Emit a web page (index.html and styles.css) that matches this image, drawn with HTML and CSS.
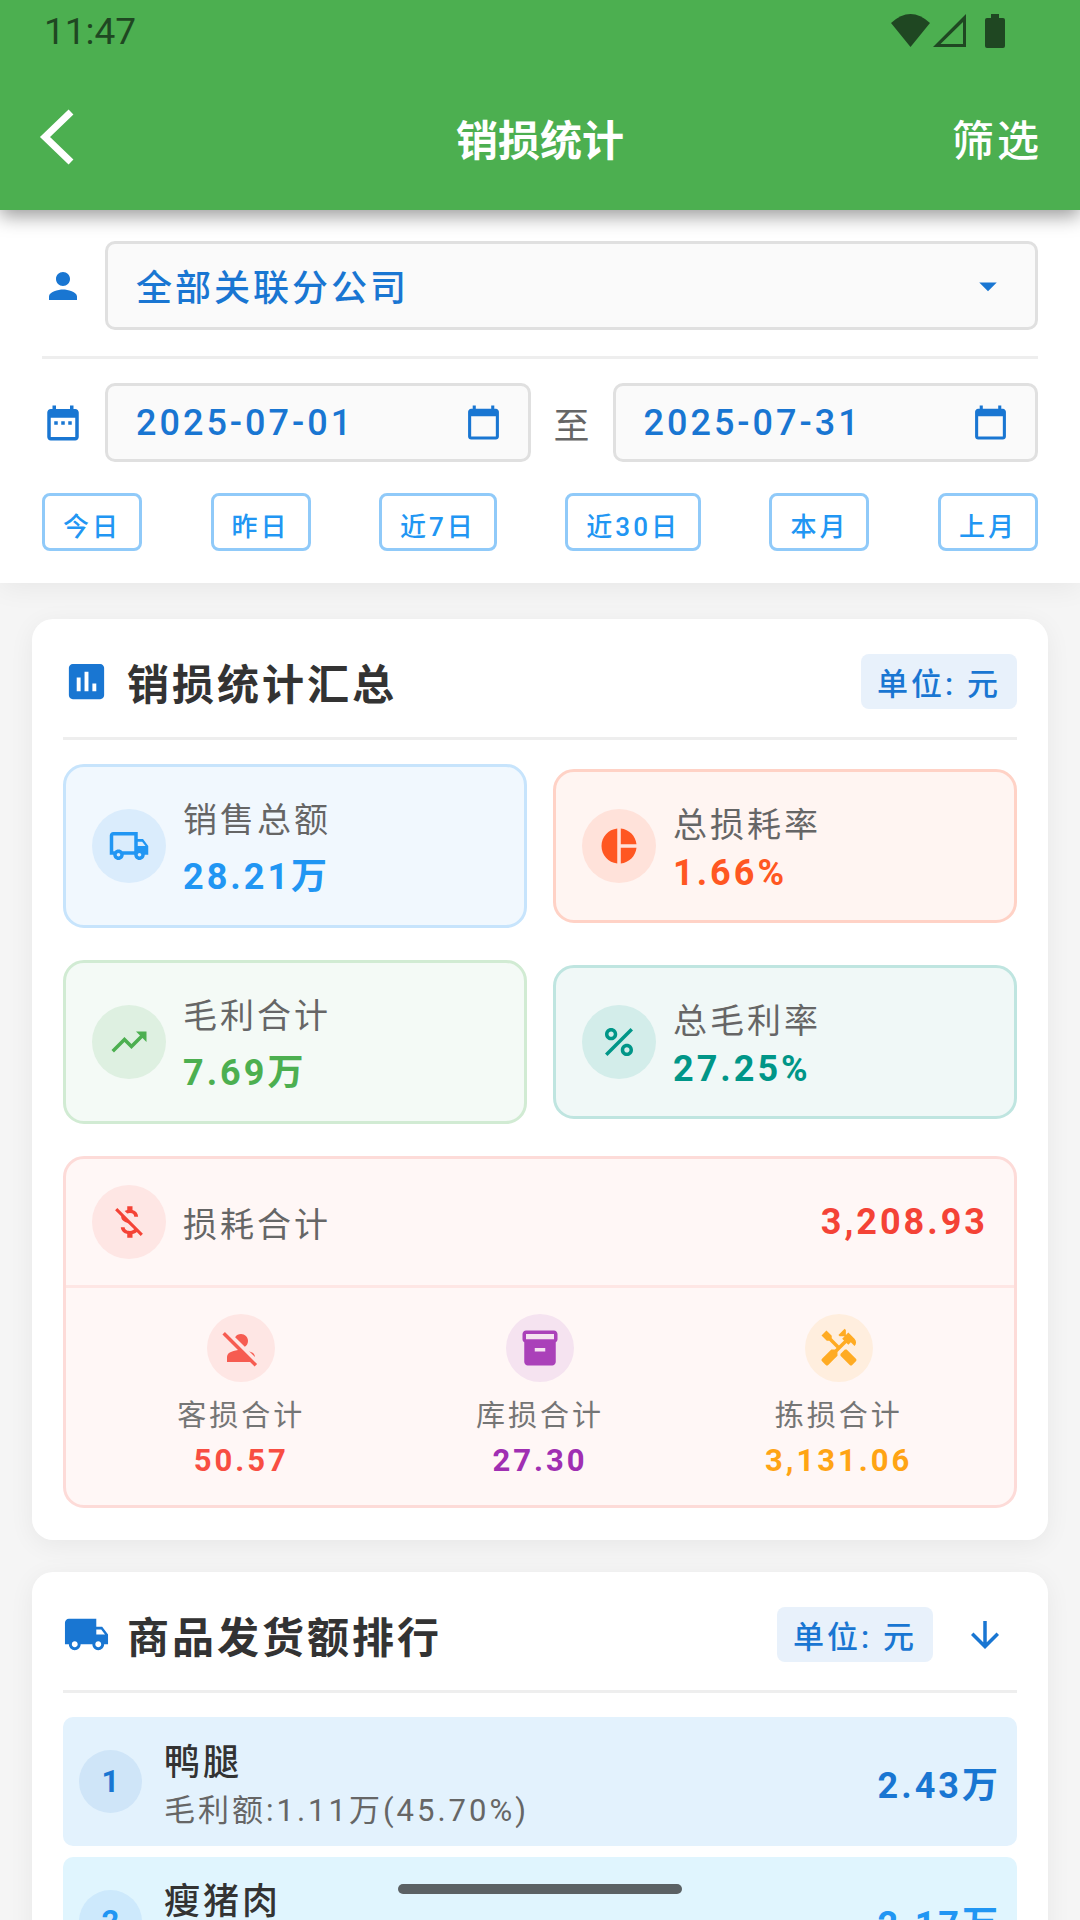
FILE: index.html
```html
<!DOCTYPE html>
<html lang="zh-CN">
<head>
<meta charset="utf-8">
<meta name="viewport" content="width=device-width, initial-scale=1">
<title>销损统计</title>
<link rel="stylesheet" href="styles.css">
</head>
<body>
<div class="app">
  <header class="top">
    <div class="status">
      <span class="clock">11:47</span>
      <svg class="status-icons" viewBox="0 0 114 34" aria-hidden="true">
        <path d="M0 9Q19.500-9 39 9L19.500 33z"/>
        <path fill-rule="evenodd" d="M75 0V33H42zM72 8L49.500 30H72z"/>
        <path d="M100 0h8v4h4q2 0 2 2v26q0 2-2 2H96q-2 0-2-2V6q0-2 2-2h4z"/>
      </svg>
    </div>
    <div class="toolbar">
      <button class="back" type="button" aria-label="返回">
        <svg viewBox="0 0 36 56" aria-hidden="true"><path d="M33 3L7 28l26 25" fill="none" stroke="currentColor" stroke-width="7"/></svg>
      </button>
      <h1 class="page-title">销损统计</h1>
      <button class="filter-btn" type="button">筛选</button>
    </div>
  </header>

  <main class="content">
    <form class="filters">
      <div class="filter-row company-row">
        <svg class="icon blue" viewBox="0 0 24 24" aria-hidden="true"><path d="M12 12c2.210 0 4-1.790 4-4s-1.790-4-4-4-4 1.790-4 4 1.790 4 4 4zm0 2c-2.670 0-8 1.340-8 4v2h16v-2c0-2.660-5.330-4-8-4z"/></svg>
        <div class="select-wrap">
          <select class="field company" aria-label="分公司">
            <option>全部关联分公司</option>
          </select>
          <svg class="icon blue caret" viewBox="0 0 24 24" aria-hidden="true"><path d="M7 10l5 5 5-5z"/></svg>
        </div>
      </div>
      <div class="filter-row date-row">
        <svg class="icon blue" viewBox="0 0 24 24" aria-hidden="true"><path d="M9 11H7v2h2v-2zm4 0h-2v2h2v-2zm4 0h-2v2h2v-2zm2-7h-1V2h-2v2H8V2H6v2H5c-1.110 0-1.990.9-1.990 2L3 20c0 1.100.89 2 2 2h14c1.100 0 2-.9 2-2V6c0-1.100-.9-2-2-2zm0 16H5V9h14v11z"/></svg>
        <label class="field date">
          <input class="date-input" type="text" value="2025-07-01" aria-label="开始日期">
          <svg class="icon-sm blue" viewBox="0 0 24 24" aria-hidden="true"><path d="M20 3h-1V1h-2v2H7V1H5v2H4c-1.100 0-2 .9-2 2v16c0 1.100.9 2 2 2h16c1.100 0 2-.9 2-2V5c0-1.100-.9-2-2-2zm0 18H4V8h16v13z"/></svg>
        </label>
        <span class="to">至</span>
        <label class="field date">
          <input class="date-input" type="text" value="2025-07-31" aria-label="结束日期">
          <svg class="icon-sm blue" viewBox="0 0 24 24" aria-hidden="true"><path d="M20 3h-1V1h-2v2H7V1H5v2H4c-1.100 0-2 .9-2 2v16c0 1.100.9 2 2 2h16c1.100 0 2-.9 2-2V5c0-1.100-.9-2-2-2zm0 18H4V8h16v13z"/></svg>
        </label>
      </div>
      <div class="quick">
        <button class="quick-btn" type="button">今日</button>
        <button class="quick-btn" type="button">昨日</button>
        <button class="quick-btn" type="button">近7日</button>
        <button class="quick-btn" type="button">近30日</button>
        <button class="quick-btn" type="button">本月</button>
        <button class="quick-btn" type="button">上月</button>
      </div>
    </form>

    <section class="card">
      <div class="card-head">
        <svg class="icon-lg blue" viewBox="0 0 24 24" aria-hidden="true"><path d="M19 3H5c-1.100 0-2 .9-2 2v14c0 1.100.9 2 2 2h14c1.100 0 2-.9 2-2V5c0-1.100-.9-2-2-2zM9 17H7v-7h2v7zm4 0h-2V7h2v10zm4 0h-2v-4h2v4z"/></svg>
        <h2 class="card-title">销损统计汇总</h2>
        <span class="unit">单位: 元</span>
      </div>
      <div class="stats">
        <div class="stat sales">
          <span class="badge"><svg class="icon" viewBox="0 0 24 24" aria-hidden="true"><path d="M20 8h-3V4H3c-1.100 0-2 .9-2 2v11h2c0 1.660 1.340 3 3 3s3-1.340 3-3h6c0 1.660 1.340 3 3 3s3-1.340 3-3h2v-5l-3-4zm-.5 1.500l1.960 2.500H17V9.500h2.500zM6 18c-.55 0-1-.45-1-1s.45-1 1-1 1 .45 1 1-.45 1-1 1zm2.220-3c-.55-.61-1.330-1-2.220-1s-1.670.39-2.220 1H3V6h12v9H8.220zM18 18c-.55 0-1-.45-1-1s.45-1 1-1 1 .45 1 1-.45 1-1 1z"/></svg></span>
          <div class="stat-text"><span class="label">销售总额</span><strong class="value">28.21万</strong></div>
        </div>
        <div class="stat loss-rate">
          <span class="badge"><svg class="icon" viewBox="0 0 24 24" aria-hidden="true"><path d="M11 2v20c-5.070-.5-9-4.790-9-10s3.930-9.500 9-10zm2.030 0v8.990H22c-.47-4.740-4.240-8.520-8.970-8.990zm0 11.010V22c4.740-.47 8.500-4.250 8.970-8.990h-8.970z"/></svg></span>
          <div class="stat-text"><span class="label">总损耗率</span><strong class="value">1.66%</strong></div>
        </div>
        <div class="stat profit">
          <span class="badge"><svg class="icon" viewBox="0 0 24 24" aria-hidden="true"><path d="M16 6l2.290 2.290-4.880 4.880-4-4L2 16.590 3.410 18l6-6 4 4 6.300-6.290L22 12V6z"/></svg></span>
          <div class="stat-text"><span class="label">毛利合计</span><strong class="value">7.69万</strong></div>
        </div>
        <div class="stat profit-rate">
          <span class="badge"><svg class="icon" viewBox="0 0 24 24" aria-hidden="true"><path d="M7.500 11C9.430 11 11 9.430 11 7.500S9.430 4 7.500 4 4 5.570 4 7.500 5.570 11 7.500 11zm0-5C8.330 6 9 6.670 9 7.500S8.330 9 7.500 9 6 8.330 6 7.500 6.670 6 7.500 6zM4 18.590L18.590 4 20 5.410 5.410 20zM16.500 13c-1.930 0-3.500 1.570-3.500 3.500s1.570 3.500 3.500 3.500 3.500-1.570 3.500-3.500-1.570-3.500-3.500-3.500zm0 5c-.83 0-1.500-.67-1.500-1.500s.67-1.500 1.500-1.500 1.500.67 1.500 1.500-.67 1.500-1.500 1.500z"/></svg></span>
          <div class="stat-text"><span class="label">总毛利率</span><strong class="value">27.25%</strong></div>
        </div>
      </div>
      <div class="loss">
        <div class="loss-head">
          <span class="badge"><svg class="icon" viewBox="0 0 24 24" aria-hidden="true"><path d="M12.500 6.900c1.780 0 2.440.85 2.500 2.100h2.210c-.07-1.720-1.120-3.300-3.210-3.810V3h-3v2.160c-.53.12-1.030.3-1.480.54l1.470 1.470c.41-.17.91-.27 1.510-.27zM5.330 4.060L4.060 5.330 7.500 8.770c0 2.080 1.560 3.210 3.910 3.910l3.510 3.510c-.34.48-1.050.91-2.420.91-2.060 0-2.870-.92-2.980-2.100h-2.200c.12 2.190 1.760 3.420 3.680 3.830V21h3v-2.150c.96-.18 1.820-.55 2.450-1.120l2.220 2.220 1.270-1.270L5.330 4.060z"/></svg></span>
          <span class="label">损耗合计</span>
          <strong class="value">3,208.93</strong>
        </div>
        <div class="loss-parts">
          <div class="part customer">
            <span class="badge small"><svg class="icon" viewBox="0 0 24 24" aria-hidden="true"><path d="M8.650 5.820C9.360 4.720 10.600 4 12 4c2.210 0 4 1.790 4 4 0 1.400-.72 2.640-1.820 3.350L8.650 5.820zM20 17.170c-.02-1.100-.63-2.110-1.610-2.620-.54-.28-1.130-.54-1.770-.76L20 17.170zM21.190 21.190L2.810 2.810 1.390 4.220l8.890 8.890c-1.810.23-3.390.79-4.670 1.450C4.610 15.070 4 16.100 4 17.220V20h13.170l2.610 2.610 1.410-1.420z"/></svg></span>
            <span class="part-label">客损合计</span>
            <strong class="part-value">50.57</strong>
          </div>
          <div class="part stock">
            <span class="badge small"><svg class="icon" viewBox="0 0 24 24" aria-hidden="true"><path d="M20 2H4c-1 0-2 .9-2 2v3.010c0 .72.43 1.340 1 1.690V20c0 1.100 1.100 2 2 2h14c.9 0 2-.9 2-2V8.700c.57-.35 1-.97 1-1.690V4c0-1.100-1-2-2-2zm-5 12H9v-2h6v2zm5-7H4V4h16v3z"/></svg></span>
            <span class="part-label">库损合计</span>
            <strong class="part-value">27.30</strong>
          </div>
          <div class="part picking">
            <span class="badge small"><svg class="icon" viewBox="0 0 24 24" aria-hidden="true"><path d="M21.670 18.170l-5.300-5.300h-.99l-2.540 2.540v.99l5.300 5.300c.39.39 1.020.39 1.410 0l2.120-2.120c.39-.38.39-1.020 0-1.410z"/><path d="M17.340 10.190l1.410-1.410 2.120 2.120c1.170-1.170 1.170-3.070 0-4.240l-3.540-3.540-1.410 1.410V1.710L15.220 1l-3.540 3.540.71.71h2.830l-1.410 1.410 1.060 1.060-2.890 2.890-4.130-4.130V5.060L4.830 2.040 2 4.870 5.030 7.900h1.410l4.130 4.130-.85.85H7.600l-5.300 5.300c-.39.39-.39 1.020 0 1.410l2.120 2.120c.39.39 1.020.39 1.410 0l5.300-5.300v-2.120l5.150-5.150z"/></svg></span>
            <span class="part-label">拣损合计</span>
            <strong class="part-value">3,131.06</strong>
          </div>
        </div>
      </div>
    </section>

    <section class="card">
      <div class="card-head">
        <svg class="icon-lg blue" viewBox="0 0 24 24" aria-hidden="true"><path d="M20 8h-3V4H3c-1.100 0-2 .9-2 2v11h2c0 1.660 1.340 3 3 3s3-1.340 3-3h6c0 1.660 1.340 3 3 3s3-1.340 3-3h2v-5l-3-4zM6 18.500c-.83 0-1.500-.67-1.500-1.500s.67-1.500 1.500-1.500 1.500.67 1.500 1.500-.67 1.500-1.500 1.500zm13.500-9l1.960 2.500H17V9.500h2.500zm-1.500 9c-.83 0-1.500-.67-1.500-1.500s.67-1.500 1.500-1.500 1.500.67 1.500 1.500-.67 1.500-1.500 1.500z"/></svg>
        <h2 class="card-title">商品发货额排行</h2>
        <span class="unit">单位: 元</span>
        <button class="sort" type="button" aria-label="降序">
          <svg class="icon" viewBox="0 0 24 24" aria-hidden="true"><path d="M20 12l-1.410-1.410L13 16.170V4h-2v12.170l-5.580-5.590L4 12l8 8 8-8z"/></svg>
        </button>
      </div>
      <ol class="ranking">
        <li class="rank first">
          <span class="rank-no">1</span>
          <div class="rank-text"><span class="rank-name">鸭腿</span><span class="rank-sub">毛利额:1.11万(45.70%)</span></div>
          <strong class="value">2.43万</strong>
        </li>
        <li class="rank second">
          <span class="rank-no">2</span>
          <div class="rank-text"><span class="rank-name">瘦猪肉</span></div>
          <strong class="value">2.17万</strong>
        </li>
      </ol>
    </section>
  </main>
  <div class="home-bar"></div>
</div>
</body>
</html>
```
FILE: styles.css
```css
* {
  box-sizing: border-box;
}

body {
  margin: 0;
  background: #f5f5f5;
  font-family: Roboto, "Noto Sans CJK SC", sans-serif;
  letter-spacing: 3px;
  color: #333;
}

button,
input,
select {
  margin: 0;
  padding: 0;
  border: 0;
  background: none;
  font: inherit;
  letter-spacing: inherit;
  color: inherit;
}

svg {
  display: block;
  flex: none;
  fill: currentColor;
}

.app {
  position: relative;
  display: flex;
  flex-direction: column;
  height: 100vh;
  overflow: hidden;
}

/* Header */

.top {
  position: relative;
  z-index: 1;
  flex: none;
  background: #4caf50;
  color: #fff;
  box-shadow: 0 6px 18px rgba(0, 0, 0, 0.4);
}

.status {
  display: flex;
  align-items: center;
  justify-content: space-between;
  height: 62px;
  padding: 0 75px 0 44px;
  color: #1f4722;
}

.clock {
  font-size: 37px;
  letter-spacing: normal;
}

.status-icons {
  width: 114px;
  height: 34px;
}

.toolbar {
  display: grid;
  grid-template-columns: 1fr auto 1fr;
  align-items: center;
  height: 148px;
  padding: 2px 38px 0;
}

.back {
  justify-self: start;
}

.back svg {
  width: 36px;
  height: 56px;
}

.page-title {
  margin: 0;
  font-size: 42px;
  font-weight: 700;
  letter-spacing: normal;
}

.filter-btn {
  justify-self: end;
  font-size: 42px;
  font-weight: 500;
}

/* Filters */

.content {
  flex: 1;
  min-height: 0;
  overflow: hidden;
}

.filters {
  padding: 31px 42px 32px;
  background: #fff;
  box-shadow: 0 5px 26px rgba(0, 0, 0, 0.06);
}

.filter-row {
  display: flex;
  align-items: center;
  gap: 21px;
}

.company-row {
  padding-bottom: 26px;
  border-bottom: 3px solid #eee;
}

.date-row {
  padding: 24px 0 31px;
}

.icon {
  width: 42px;
  height: 42px;
}

.icon-sm {
  width: 37px;
  height: 37px;
}

.icon-lg {
  width: 47px;
  height: 47px;
}

.blue {
  color: #1976d2;
}

.field {
  border: 3px solid #e0e0e0;
  border-radius: 10px;
  background: #fafafa;
  color: #1976d2;
  font-size: 36px;
  font-weight: 500;
}

.select-wrap {
  position: relative;
  flex: 1;
}

.company {
  display: block;
  width: 100%;
  height: 89px;
  padding: 7px 26px 0 28px;
  appearance: none;
}

.caret {
  position: absolute;
  top: 50%;
  right: 29px;
  margin-top: -21px;
  pointer-events: none;
}

.date {
  display: flex;
  flex: 1;
  align-items: center;
  min-width: 0;
  height: 79px;
  padding: 0 26px 0 28px;
}

.date-input {
  flex: 1;
  min-width: 0;
}

.to {
  padding: 0 2px;
  color: #666;
  font-size: 36px;
  letter-spacing: normal;
}

.quick {
  display: flex;
  justify-content: space-between;
}

.quick-btn {
  padding: 10px 18px 5px;
  border: 3px solid #90caf9;
  border-radius: 8px;
  color: #2196f3;
  font-size: 26px;
  font-weight: 500;
}

/* Cards */

.card {
  margin: 32px 32px 0;
  padding: 32px 31px;
  border-radius: 21px;
  background: #fff;
  box-shadow: 0 5px 26px rgba(0, 0, 0, 0.06);
}

.filters + .card {
  margin-top: 36px;
}

.card-head {
  display: flex;
  align-items: center;
  padding-bottom: 25px;
  border-bottom: 3px solid #eee;
}

.card-title {
  flex: 1;
  margin: 0;
  padding-left: 17px;
  font-size: 42px;
  font-weight: 700;
}

.unit {
  padding: 5px 16px;
  border-radius: 8px;
  background: #e8f1fb;
  color: #1976d2;
  font-size: 31px;
  font-weight: 500;
}

.sort {
  margin-left: 20px;
  padding: 0 11px;
  color: #1976d2;
}

.stats {
  display: grid;
  grid-template-columns: 1fr 1fr;
  align-items: center;
  gap: 32px 26px;
  padding: 24px 0 32px;
}

.stat {
  display: flex;
  align-items: center;
  gap: 17px;
  padding: 26px;
  border: 3px solid;
  border-radius: 21px;
}

.stat-text {
  display: flex;
  flex-direction: column;
  gap: 5px;
}

.badge {
  display: grid;
  flex: none;
  place-items: center;
  width: 74px;
  height: 74px;
  border-radius: 50%;
}

.small {
  width: 68px;
  height: 68px;
}

.label {
  color: #666;
  font-size: 34px;
}

.value {
  font-size: 36px;
  font-weight: 700;
}

.sales {
  border-color: #c7e4fc;
  background: #f1f8fe;
}

.sales .badge {
  background: #daecfc;
}

.sales .badge,
.sales .value {
  color: #2196f3;
}

.loss-rate {
  border-color: #ffd2c6;
  background: #fff5f2;
}

.loss-rate .badge {
  background: #ffe2da;
}

.loss-rate .badge,
.loss-rate .value {
  color: #ff5722;
}

.profit {
  border-color: #d1ebd3;
  background: #f4faf6;
}

.profit .badge {
  background: #def0e1;
}

.profit .badge,
.profit .value {
  color: #4caf50;
}

.profit-rate {
  border-color: #bfe5e0;
  background: #f0f8f7;
}

.profit-rate .badge {
  background: #d3edea;
}

.profit-rate .badge,
.profit-rate .value {
  color: #009688;
}

.loss {
  border: 3px solid #fddbd8;
  border-radius: 21px;
  background: #fff7f6;
}

.loss-head {
  display: flex;
  align-items: center;
  gap: 17px;
  padding: 26px;
  border-bottom: 3px solid #fee6e4;
}

.loss-head .badge {
  background: #fee6e4;
}

.loss-head .badge,
.loss-head .value {
  color: #f44336;
}

.loss-head .label {
  flex: 1;
}

.loss-parts {
  display: grid;
  grid-template-columns: repeat(3, 1fr);
  padding: 26px;
}

.part {
  display: flex;
  flex-direction: column;
  align-items: center;
}

.part-label {
  padding: 10px 0 8px;
  color: #757575;
  font-size: 29px;
}

.part-value {
  font-size: 31px;
  font-weight: 700;
}

.customer .badge {
  background: #fee6e4;
  color: #f65c51;
}

.customer .part-value {
  color: #f84e42;
}

.stock .badge {
  background: #f5e3f0;
  color: #aa41b9;
}

.stock .part-value {
  color: #a02fb2;
}

.picking .badge {
  background: #ffeede;
  color: #ffab23;
}

.picking .part-value {
  color: #ffa414;
}

/* Ranking */

.ranking {
  display: flex;
  flex-direction: column;
  gap: 11px;
  margin: 0;
  padding: 24px 0 0;
  list-style: none;
}

.rank {
  display: flex;
  align-items: center;
  min-height: 129px;
  padding: 15px 16px;
  border-radius: 10px;
}

.first {
  background: #e3f2fd;
}

.second {
  align-items: flex-start;
  background: #e0f5fe;
}

.second .rank-no {
  margin-top: 18px;
}

.second .value {
  margin-top: 23px;
}

.rank-no {
  display: grid;
  place-items: center;
  width: 63px;
  height: 63px;
  border-radius: 50%;
  font-size: 31px;
  font-weight: 700;
  letter-spacing: normal;
}

.rank-text {
  display: flex;
  flex: 1;
  flex-direction: column;
  padding-left: 22px;
}

.rank-name {
  font-size: 36px;
  font-weight: 500;
}

.rank-sub {
  color: #666;
  font-size: 31px;
}

.first .rank-no {
  background: #cfe5f8;
  color: #1976d2;
}

.first .value {
  color: #1976d2;
}

.second .rank-no {
  background: #cde9fc;
  color: #2196f3;
}

.second .value {
  color: #2196f3;
}

/* System gesture bar floating over the page */

.home-bar {
  position: absolute;
  bottom: 26px;
  left: 50%;
  z-index: 2;
  width: 284px;
  height: 10px;
  margin-left: -142px;
  border-radius: 5px;
  background: #5b6164;
}
```
